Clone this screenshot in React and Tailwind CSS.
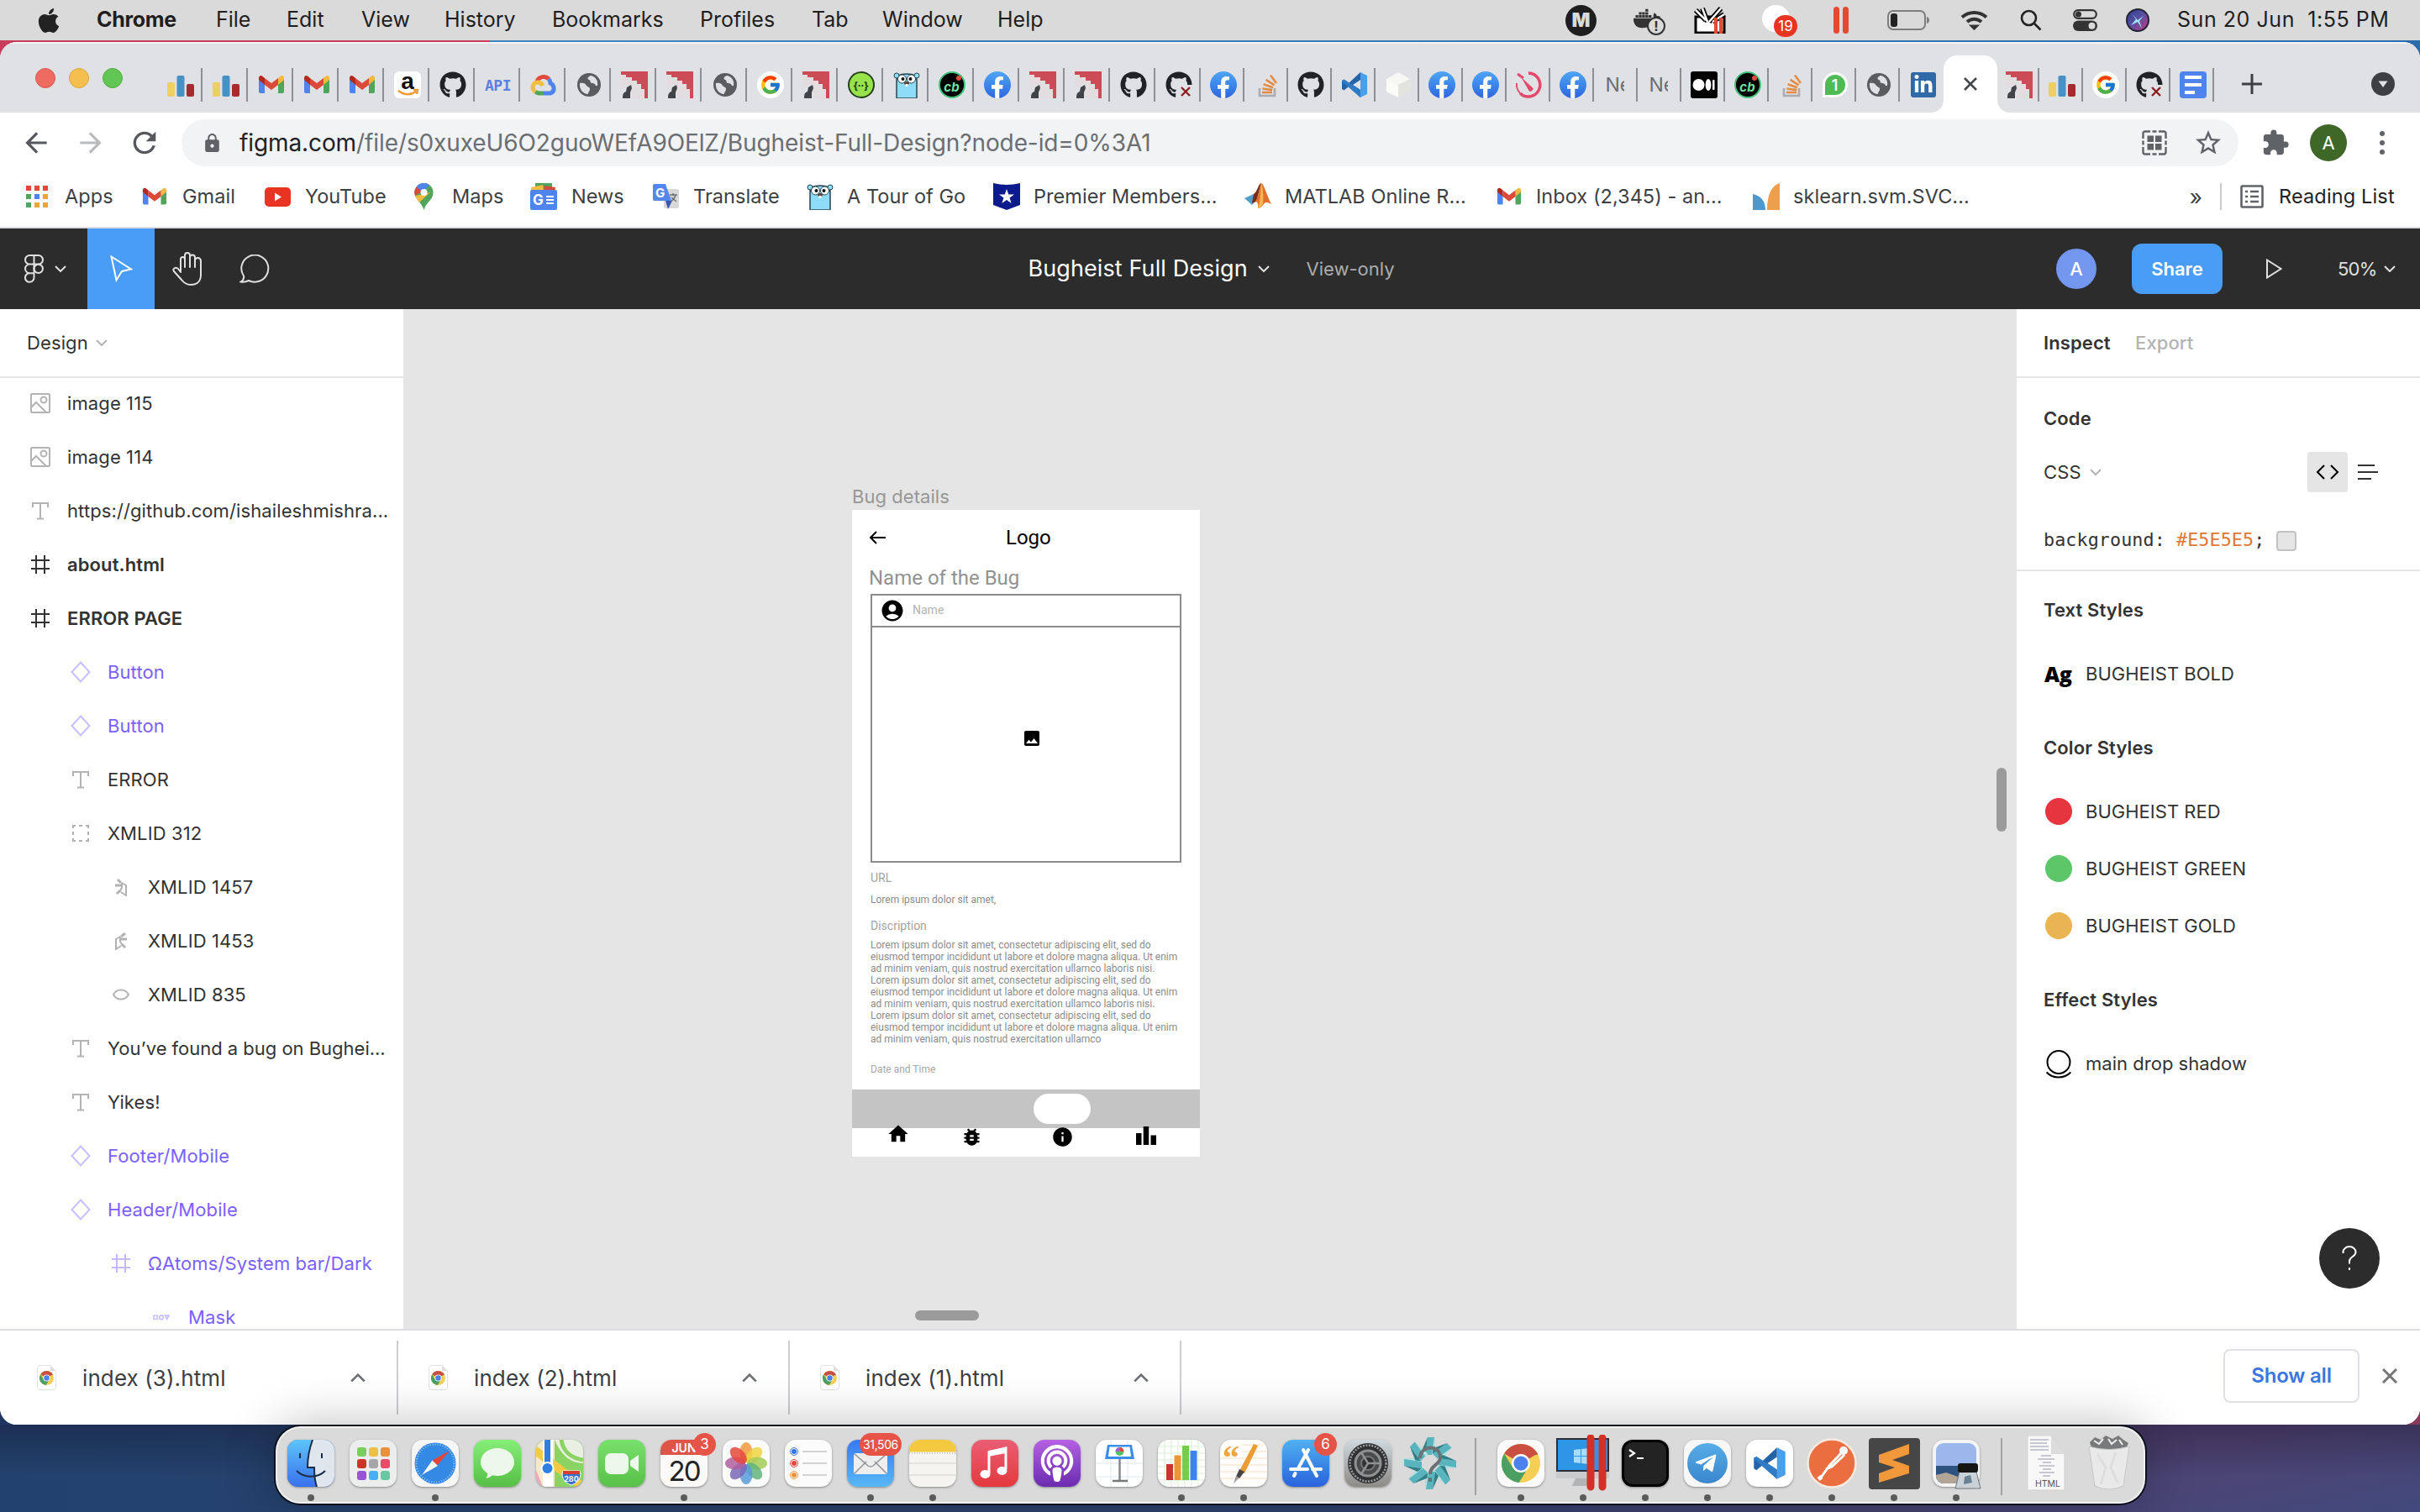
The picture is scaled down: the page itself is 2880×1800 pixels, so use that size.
import React from "react";
import { FaApple, FaGithub, FaAmazon, FaDocker, FaStackOverflow, FaLinkedinIn, FaPodcast, FaTelegramPlane, FaFacebookF } from "react-icons/fa";
import { MdHome, MdBugReport, MdInfo, MdAccountCircle, MdImage, MdExtension, MdStarBorder, MdLock, MdArrowBack, MdArrowForward, MdRefresh } from "react-icons/md";
import { FcGoogle } from "react-icons/fc";

const ui = "font-['Inter','Liberation_Sans',sans-serif]";
const rb = "font-['Roboto','Liberation_Sans',sans-serif]";

/* ---------- shared glyphs ---------- */

function Chevron({ className = "", up = false }) {
  return (
    <svg className={className} viewBox="0 0 14 8" fill="none" stroke="currentColor" strokeWidth="2">
      {up ? <path d="M1 7l6-6 6 6" /> : <path d="M1 1l6 6 6-6" />}
    </svg>
  );
}

function Gmail({ className = "h-8 w-8" }) {
  return (
    <svg className={className} viewBox="0 0 32 32">
      <path d="M1 7v17a2 2 0 002 2h5V13L4 9z" fill="#4f84ee" />
      <path d="M31 7v17a2 2 0 01-2 2h-5V13l4-4z" fill="#4ea55b" />
      <path d="M1 8v2l7 6V8L5 5.600C3.300 4.300 1 5.500 1 8z" fill="#b3291e" />
      <path d="M31 8v2l-7 6V8l3-2.400c1.700-1.300 4-.1 4 2.400z" fill="#f3b93d" />
      <path d="M8 16V8l8 6 8-6v8l-8 6z" fill="#db4a39" />
    </svg>
  );
}

function BarsIcon() {
  return (
    <svg className="h-8 w-8" viewBox="0 0 32 32">
      <rect x="0" y="13" width="9" height="17" rx="2" fill="#eecf62" />
      <rect x="11.500" y="5" width="9" height="25" rx="2" fill="#4791c7" />
      <rect x="23" y="15" width="9" height="15" rx="2" fill="#a62b2f" />
    </svg>
  );
}

function GitHubFail() {
  return (
    <div className="relative h-8 w-8">
      <FaGithub className="h-8 w-8 text-[#1f2328]" />
      <div className="absolute -right-px bottom-0 flex h-4 w-[17px] items-center justify-center bg-[#dfe1e5]">
        <svg className="h-3 w-3" viewBox="0 0 12 12" stroke="#8f1d1d" strokeWidth="2.400"><path d="M1 1l10 10M11 1L1 11" /></svg>
      </div>
    </div>
  );
}

function Globe() {
  return (
    <svg className="h-[30px] w-[30px]" viewBox="0 0 30 30">
      <circle cx="15" cy="15" r="14" fill="#5a5c5e" />
      <path d="M4 13c5-1 7 1 8 3s4 1 4 4-2 3-2 6c-6 0-11-6-10-13zM17 4c-3 1-5 4-2 5s0 4 4 4 3 4 6 3c1-6-2-11-8-12z" fill="#dfe1e5" />
    </svg>
  );
}

function KiteIcon() {
  return (
    <svg className="h-8 w-8" viewBox="0 0 32 32">
      <path d="M0 0h32v32h-4V21h-4v-6h-5v-4h-6V7H6V4H0z" fill="#cb4b57" />
      <path d="M0 4h6v3h7v4h6v4h5v6h4v11H13V16H6L0 24z" fill="#e3dde0" />
      <path d="M2 32c0-5 1-7 4-8l1-5 5-3 1 4-2 5v7z" fill="#424344" />
    </svg>
  );
}

function Gopher() {
  return (
    <svg className="h-8 w-8" viewBox="0 0 32 32">
      <path d="M4 32V10C4 5 8 3 16 3s12 2 12 7v22z" fill="#8fdcf8" stroke="#26454f" strokeWidth="1.500" />
      <circle cx="4" cy="5" r="3" fill="#8fdcf8" stroke="#26454f" />
      <circle cx="28" cy="5" r="3" fill="#8fdcf8" stroke="#26454f" />
      <circle cx="10.500" cy="9" r="5" fill="#fff" stroke="#26454f" />
      <circle cx="21.500" cy="9" r="5" fill="#fff" stroke="#26454f" />
      <circle cx="11.500" cy="9" r="2" fill="#111" />
      <circle cx="20.500" cy="9" r="2" fill="#111" />
      <ellipse cx="16" cy="14" rx="3" ry="2" fill="#5b4638" />
      <rect x="14.500" y="15" width="3" height="3" fill="#fff" />
    </svg>
  );
}

function CloudIcon() {
  return (
    <svg className="h-8 w-8" viewBox="0 0 32 32" fill="none" strokeWidth="5">
      <path d="M8 12a8.500 8.500 0 0114-3" stroke="#e24b3c" />
      <path d="M22 9c2 2 2 4 2 5 5 2 6 10 0 12h-8" stroke="#4f84ee" />
      <path d="M16 26h-6l-4-1.500" stroke="#4ea55b" />
      <path d="M6 24.500C1 20 3 13 9 13c3 0 5 2 6 4" stroke="#f3bd42" />
    </svg>
  );
}

function GoogleTab() {
  return <div className="flex h-8 w-8 items-center justify-center rounded-full bg-white"><FcGoogle className="h-[26px] w-[26px]" /></div>;
}

function Facebook() {
  return (
    <div className="flex h-8 w-8 items-end justify-center overflow-hidden rounded-full bg-linear-to-b from-[#4fa5f5] to-[#2f66dd]">
      <FaFacebookF className="h-[26px] w-[20px] text-white" />
    </div>
  );
}

function CodeBeautify() {
  return (
    <div className={`relative flex h-8 w-8 items-center justify-center rounded-full border-2 border-[#41c47c] bg-black pt-1 text-[15px] font-bold italic leading-none text-[#6fe39d] ${ui}`}>
      cb
      <i className="absolute right-[3px] top-[3px] h-[6px] w-[6px] rounded-full bg-[#e2493b]" />
    </div>
  );
}

function VsCode({ className = "h-8 w-8" }) {
  return (
    <svg className={className} viewBox="0 0 32 32">
      <path d="M23 1L9 14 3.500 9.500 1 11v10l2.500 1.500L9 18l14 13V22l-9-6 9-6z" fill="#2563a8" />
      <path d="M1 11l2.500-1.500L23 22v9L1 12z" fill="#2f7cc4" />
      <path d="M23 1l8 4v22l-8 4z" fill="#4a9fe8" />
    </svg>
  );
}

function Timer() {
  return (
    <svg className="h-8 w-8" viewBox="0 0 32 32" fill="none" stroke="#e2496a" strokeWidth="3.500">
      <path d="M15 2a14 14 0 11-10 24" />
      <path d="M1 14a15 15 0 004 12" strokeWidth="2" />
      <path d="M2 3l7 5" strokeWidth="3" />
      <path d="M8 9l8 14c3 1 4-1 4-3z" fill="#e2496a" strokeWidth="1" />
    </svg>
  );
}

const Stack = () => (
  <svg className="h-8 w-8" viewBox="0 0 32 32" fill="none" strokeWidth="2.600">
    <path d="M7 20v9h18v-9" stroke="#a9acb0" />
    <path d="M10 25h12M10.300 20.500l11.900 1.600M11.600 15.300l11.300 3.900M14.600 9.800l10 6.500M20 4.500l7 9.600" stroke="#e38b43" />
  </svg>
);
const Hub = () => <FaGithub className="h-8 w-8 text-[#1f2328]" />;

const tabIcon = {
  bars: <BarsIcon />, gmail: <Gmail />, globe: <Globe />, kite: <KiteIcon />, google: <GoogleTab />, hub: <Hub />, hubx: <GitHubFail />,
  fb: <Facebook />, cb: <CodeBeautify />, go: <Gopher />, cloud: <CloudIcon />, stack: <Stack />, vs: <VsCode />, timer: <Timer />,
  amazon: <div className="flex h-8 w-8 items-center justify-center rounded-md bg-white"><svg className="h-8 w-8" viewBox="0 0 32 32"><text x="16" y="21" textAnchor="middle" fontSize="28" fontWeight="700" fontFamily="Liberation Sans" fill="#111">a</text><path d="M5 23q11 8 21 1M23 22l5 0-1 5" fill="none" stroke="#ef9b34" strokeWidth="2.400" /></svg></div>,
  api: <span className="font-['DejaVu_Sans_Mono',monospace] text-[18px] font-bold tracking-[-0.500px] text-[#5b82e0]">API</span>,
  swagger: <div className="flex h-8 w-8 items-center justify-center rounded-full border-2 border-[#24401c] bg-[#97e34c] text-[13px] font-bold leading-none text-[#1d3a1d]">{"{··}"}</div>,
  cube: <svg className="h-8 w-8" viewBox="0 0 32 32"><path d="M16 1l14 8-14 7L2 9z" fill="#f7f7f4" /><path d="M2 9l14 7v15L2 24z" fill="#fbfbf8" /><path d="M30 9l-14 7v15l14-7z" fill="#e4e4df" /></svg>,
  ne: <span className={`-ml-[4px] w-[22px] overflow-hidden whitespace-nowrap text-[23px] text-[#6a6d70] ${ui}`}>Ne</span>,
  medium: <svg className="h-8 w-8" viewBox="0 0 32 32"><rect width="32" height="32" rx="3" fill="#000" /><circle cx="9.500" cy="16" r="7" fill="#fff" /><ellipse cx="21" cy="16" rx="3.400" ry="7" fill="#fff" /><rect x="26" y="10" width="2.500" height="12" rx="1" fill="#fff" /></svg>,
  wa: <div className={`flex h-[30px] w-[30px] items-center justify-center rounded-full rounded-bl-md border-[3px] border-white bg-[#4fbb53] text-[18px] font-semibold text-white ${ui}`}>1</div>,
  li: <div className="flex h-[30px] w-[30px] items-center justify-center rounded-[3px] bg-[#2f69a8]"><FaLinkedinIn className="h-6 w-6 text-white" /></div>,
  docs: <div className="flex h-8 w-8 flex-col justify-center gap-[5px] rounded-sm bg-[#4f83ee] px-[6px]"><i className="h-1 bg-white" /><i className="h-1 bg-white" /><i className="h-1 w-3 bg-white" /></div>,
};

const wideTabs = ["bars", "bars", "gmail", "gmail", "gmail", "amazon", "hub", "api", "cloud", "globe", "kite", "kite", "globe", "google", "kite", "swagger", "go", "cb", "fb", "kite", "kite", "hub", "hubx"];
const narrowTabs = ["fb", "stack", "hub", "vs", "cube", "fb", "fb", "timer", "fb", "ne", "ne", "medium", "cb", "stack", "wa", "globe", "li"];
const lastTabs = ["kite", "bars", "google", "hubx", "docs"];

function Tab({ name, width, line = true }) {
  return (
    <div className={`flex h-10 shrink-0 items-center justify-center pl-[3px] ${width} ${line ? "border-r-2 border-[#8c8f94]" : ""}`}>{tabIcon[name]}</div>
  );
}

/* ---------- macOS menu bar ---------- */

const menus = [["Chrome", "w-[142px] font-bold tracking-[-0.300px]"], ["File", "w-[84px]"], ["Edit", "w-[89px]"], ["View", "w-[99px]"], ["History", "w-[128px]"], ["Bookmarks", "w-[176px]"], ["Profiles", "w-[133px]"], ["Tab", "w-[84px]"], ["Window", "w-[137px]"], ["Help", "w-[60px]"]];

function MenuBar() {
  return (
    <header className={`flex h-12 items-center bg-[#dadada] text-[25px] text-[#1e1e1e] ${ui}`}>
      <div className="flex w-[115px] justify-center"><FaApple className="h-[33px] w-[30px] text-[#222]" /></div>
      {menus.map(([label, cls]) => <span key={label} className={`shrink-0 whitespace-nowrap ${cls}`}>{label}</span>)}
      <div className="ml-auto flex items-center pr-[37px]">
        <div className="mr-[44px] flex h-[37px] w-[37px] items-center justify-center rounded-full bg-[#1e1e1e] text-[23px] font-black text-[#dadada]">M</div>
        <div className="relative mr-[33px] h-8 w-[38px]">
          <FaDocker className="h-7 w-8 text-[#333]" />
          <div className="absolute -bottom-[2px] right-0 flex h-[22px] w-[22px] items-center justify-center rounded-full border-2 border-[#333] bg-[#dadada] text-[16px] font-bold leading-none text-[#333]">!</div>
        </div>
        <svg className="mx-[1px] mr-[43px] h-8 w-[38px]" viewBox="0 0 38 32">
          <rect x="2" y="12" width="34" height="19" fill="#fff" stroke="#000" strokeWidth="3" />
          <path d="M2 4l12 12M10 2l6 16M32 2L18 18M36 9L22 18" stroke="#000" strokeWidth="6" />
          <path d="M2 4l12 12M10 2l6 16M32 2L18 18M36 9L22 18" stroke="#fff" strokeWidth="2.500" />
          <path d="M26 13v19M32 13v19" stroke="#e5492f" strokeWidth="4" />
        </svg>
        <div className="relative mr-[43px] h-9 w-[42px]">
          <div className="h-8 w-[33px] rounded-full bg-white" />
          <div className="absolute -bottom-[2px] right-0 flex h-[26px] w-[28px] items-center justify-center rounded-full bg-[#ea3323] text-[17px] leading-none text-white">19</div>
        </div>
        <div className="mr-[46px] flex gap-1"><i className="h-8 w-[7px] rounded-full bg-[#e5492f]" /><i className="h-8 w-[7px] rounded-full bg-[#e5492f]" /></div>
        <svg className="mr-[36px] h-6 w-[51px]" viewBox="0 0 51 24"><rect x="1" y="1" width="44" height="22" rx="6" fill="none" stroke="#7d7d7d" strokeWidth="2" /><rect x="4" y="4" width="8" height="16" rx="3" fill="#222" /><path d="M47 8c4 1 4 7 0 8z" fill="#7d7d7d" /></svg>
        <svg className="mr-[38px] h-6 w-[33px]" viewBox="0 0 33 24" fill="none" stroke="#333" strokeWidth="4"><path d="M2 8.500c8-7.500 21-7.500 29 0" /><path d="M8 14c5-4.500 12-4.500 17 0" /><path d="M13.500 19h6l-3 3z" fill="#333" strokeWidth="3" /></svg>
        <svg className="mr-[37px] h-[26px] w-[26px]" viewBox="0 0 26 26" fill="none" stroke="#222" strokeWidth="2.600"><circle cx="10.500" cy="10.500" r="8.500" /><path d="M17 17l7.500 7.500" /></svg>
        <svg className="mr-[34px] h-[26px] w-[29px]" viewBox="0 0 29 26"><rect x="1.200" y="1.200" width="26.600" height="9.600" rx="4.800" fill="none" stroke="#333" strokeWidth="2.200" /><circle cx="6.500" cy="6" r="3.500" fill="#333" /><rect y="13.500" width="29" height="12.500" rx="6.200" fill="#333" /><circle cx="22.500" cy="19.700" r="4" fill="#dadada" /></svg>
        <svg className="mr-[33px] h-7 w-7" viewBox="0 0 28 28"><defs><linearGradient id="siri" x1="0" y1="0" x2="1" y2="1"><stop offset="0" stopColor="#2a3f8f" /><stop offset=".5" stopColor="#5d4fa3" /><stop offset="1" stopColor="#c0397c" /></linearGradient></defs><circle cx="14" cy="14" r="14" fill="#23233a" /><circle cx="14" cy="14" r="12" fill="url(#siri)" /><path d="M7 6l7 8 7-5-5 6 3 9-5-8-8 4 6-7z" fill="#9fe9f2" /></svg>
        <span className="w-[252px] whitespace-pre tracking-[0.550px]">Sun 20 Jun  1:55 PM</span>
      </div>
    </header>
  );
}

/* ---------- Chrome ---------- */

function TabStrip() {
  return (
    <div className="flex h-[84px] items-start border-t-2 border-[#f3f4f6] bg-[#dfe1e5]">
      <div className="flex w-[187px] shrink-0 gap-4 pl-[42px] pt-[29px]">
        <i className="h-6 w-6 rounded-full border border-[#d65a50] bg-[#ed6b5f]" />
        <i className="h-6 w-6 rounded-full border border-[#dba640] bg-[#f5bf4f]" />
        <i className="h-6 w-6 rounded-full border border-[#54ad45] bg-[#62c654]" />
      </div>
      <div className="flex pt-[29px]">{wideTabs.map((n, i) => <Tab key={i} name={n} width="w-[54px]" />)}</div>
      <div className="flex pt-[29px]">{narrowTabs.map((n, i) => <Tab key={i} name={n} width="w-[52px]" line={i < 16} />)}</div>
      <div className="relative mt-[14px] flex h-[68px] w-[64px] shrink-0 items-center justify-center rounded-t-2xl bg-white">
        <svg className="absolute -left-4 bottom-0 h-4 w-4" viewBox="0 0 16 16"><path d="M16 0v16H0C10 16 16 10 16 0z" fill="#fff" /></svg>
        <svg className="absolute -right-4 bottom-0 h-4 w-4" viewBox="0 0 16 16"><path d="M0 0v16h16C6 16 0 10 0 0z" fill="#fff" /></svg>
        <svg className="h-4 w-4" viewBox="0 0 16 16" stroke="#45484b" strokeWidth="2.600"><path d="M1 1l14 14M15 1L1 15" /></svg>
      </div>
      <div className="flex pt-[29px]">{lastTabs.map((n, i) => <Tab key={i} name={n} width={i ? "w-[52px]" : "w-[50px]"} />)}</div>
      <svg className="ml-[33px] mt-[36px] h-6 w-6 shrink-0" viewBox="0 0 24 24" stroke="#3c4043" strokeWidth="3"><path d="M12 0v24M0 12h24" /></svg>
      <svg className="ml-auto mr-[30px] mt-[34px] h-7 w-7 shrink-0" viewBox="0 0 28 28"><circle cx="14" cy="14" r="14" fill="#3c4043" /><path d="M8.500 10.500h11L14 18z" fill="#dfe1e5" /></svg>
    </div>
  );
}

function Toolbar() {
  return (
    <div className={`flex h-[72px] items-center ${ui}`}>
      <MdArrowBack className="ml-[24px] h-[38px] w-[38px] text-[#55585c]" />
      <MdArrowForward className="ml-[27px] h-[38px] w-[38px] text-[#b9bbbe]" />
      <MdRefresh className="ml-[25px] h-[40px] w-[40px] text-[#55585c]" />
      <div className="ml-[24px] flex h-14 w-[2448px] items-center rounded-full bg-[#f1f3f4]">
        <MdLock className="ml-[24px] h-[25px] w-[25px] text-[#5f6368]" />
        <span className="ml-[20px] whitespace-nowrap text-[28px] tracking-[-0.100px] text-[#6b6e72]"><span className="text-[#202124]">figma.com</span>/file/s0xuxeU6O2guoWEfA9OElZ/Bugheist-Full-Design?node-id=0%3A1</span>
        <svg className="ml-auto h-[30px] w-[30px]" viewBox="0 0 30 30" fill="none" stroke="#5f6368" strokeWidth="2.400">
          <path d="M1.500 10V4q0-2.500 2.500-2.500h6M12.500 1.500h5M20 1.500h6q2.500 0 2.500 2.500v6M28.500 20v6q0 2.500-2.500 2.500h-6M17.500 28.500h-5M10 28.500H4q-2.500 0-2.500-2.500v-6M1.500 17.500v-5M28.500 17.500v-5" />
          <path d="M6.500 6.500h7.500v7.500h-7.500zM16 6.500h7.500v7.500h-7.500zM6.500 16h7.500v7.500h-7.500zM16 16h7.500v7.500h-7.500z" fill="#5f6368" stroke="none" />
        </svg>
        <MdStarBorder className="ml-[31px] mr-[18px] h-[36px] w-[36px] text-[#5f6368]" />
      </div>
      <MdExtension className="ml-[27px] h-[34px] w-[34px] text-[#5f6368]" />
      <div className="ml-[24px] flex h-11 w-11 items-center justify-center rounded-full bg-[#3f6727] text-[22px] text-white">A</div>
      <div className="ml-[39px] flex flex-col gap-[5px]"><i className="h-[6px] w-[6px] rounded-full bg-[#5f6368]" /><i className="h-[6px] w-[6px] rounded-full bg-[#5f6368]" /><i className="h-[6px] w-[6px] rounded-full bg-[#5f6368]" /></div>
    </div>
  );
}

const appDots = ["bg-[#e2493b]", "bg-[#e2493b]", "bg-[#e2493b]", "bg-[#4ea55b]", "bg-[#4f84ee]", "bg-[#e9a63a]", "bg-[#4ea55b]", "bg-[#e9a63a]", "bg-[#e9a63a]"];

const bookmarks = [
  { t: "Apps", w: "w-[138px]", g: "w-[46px]", icon: <div className="grid grid-cols-3 gap-1">{appDots.map((c, i) => <i key={i} className={`h-[6px] w-[6px] ${c}`} />)}</div> },
  { t: "Gmail", w: "w-[146px]", g: "w-[48px]", icon: <Gmail className="h-[30px] w-[30px]" /> },
  { t: "YouTube", w: "w-[178px]", g: "w-[48px]", icon: <svg className="h-[23px] w-[31px]" viewBox="0 0 31 23"><rect width="31" height="23" rx="5" fill="#e93323" /><path d="M12 6.500l8 5-8 5z" fill="#fff" /></svg> },
  { t: "Maps", w: "w-[138px]", g: "w-[45px]", icon: <svg className="h-8 w-[23px]" viewBox="0 0 23 32"><path d="M11.500 0a11 11 0 00-11 11c0 9 8 11 11 21 3-10 11-12 11-21a11 11 0 00-11-11z" fill="#4ea55b" /><path d="M11.500 0a11 11 0 00-9 4.500L9 12l9-10A11 11 0 0011.500 0z" fill="#4f84ee" /><path d="M2.500 4.500A11 11 0 001 15l8-5z" fill="#d9493a" /><path d="M1 15c1 3 3 5 5 8L20 10l-6 3z" fill="#f3bd42" /><circle cx="11.500" cy="11" r="4" fill="#fff" /></svg> },
  { t: "News", w: "w-[146px]", g: "w-[49px]", icon: <svg className="h-8 w-8" viewBox="0 0 32 32"><path d="M6 0h20v9H6z" fill="#4ea55b" /><path d="M1 5l14-3 1 8H1z" fill="#f3bd42" /><path d="M17 3l13 2-1 6H16z" fill="#d9493a" /><rect y="8" width="32" height="24" rx="2" fill="#4f84ee" /><text x="3" y="26" fontSize="17" fontWeight="700" fill="#fff" fontFamily="Inter">G</text><path d="M19 16h9M19 20h9M19 24h9" stroke="#fff" strokeWidth="2.200" /></svg> },
  { t: "Translate", w: "w-[183px]", g: "w-[48px]", icon: <svg className="h-8 w-8" viewBox="0 0 32 32"><rect x="13" y="7" width="18" height="23" rx="2" fill="#d8d8d8" /><path d="M15 21h8l-5 10z" fill="#3a55b4" /><path d="M2 1h13l7 20H2a2 2 0 01-2-2V3a2 2 0 012-2z" fill="#5486ec" /><text x="3" y="17" fontSize="15" fontWeight="700" fill="#fff" fontFamily="Inter">G</text><path d="M20 14h9M24 12v3M27 14c-1 4-3 6-6 8M22 17l6 5" stroke="#6b7075" strokeWidth="1.500" fill="none" /></svg> },
  { t: "A Tour of Go", w: "w-[222px]", g: "w-[48px]", icon: <Gopher /> },
  { t: "Premier Members...", w: "w-[299px]", g: "w-[48px]", icon: <svg className="h-8 w-8" viewBox="0 0 32 32"><path d="M0 0q16 4 32 0v26l-16 6-16-6z" fill="#0b1a8c" /><path d="M16 7l2.300 6.500H25l-5.400 4 2 6.500-5.600-4-5.600 4 2-6.500-5.400-4h6.700z" fill="#fff" /></svg> },
  { t: "MATLAB Online R...", w: "w-[300px]", g: "w-[48px]", icon: <svg className="h-8 w-8" viewBox="0 0 32 32"><path d="M0 18l11-5 6 4-8 9z" fill="#4f9dc8" /><path d="M11 13c4-2 6-13 9-13l-6 22-5 2z" fill="#7a2c1b" /><path d="M20 0c4 2 7 16 12 25-4-2-7-3-9 0-2 2-4 5-7 5 1-5-1-8-3-9C17 18 17 6 20 0z" fill="#e0702c" /><path d="M20 0c2 5 3 16 2 25-2 2-3 5-6 5 3-8 3-20 4-30z" fill="#f3b650" /></svg> },
  { t: "Inbox (2,345) - an...", w: "w-[305px]", g: "w-[47px]", icon: <Gmail className="h-[30px] w-[30px]" /> },
  { t: "sklearn.svm.SVC...", w: "w-[300px]", g: "w-[48px]", icon: <svg className="h-8 w-8" viewBox="0 0 32 32"><path d="M32 0v32H17C17 14 22 3 32 0z" fill="#ee9f4b" /><path d="M0 13c10 2 15 9 15 19H0z" fill="#4f98cd" /></svg> },
];

function BookmarkBar() {
  return (
    <div className={`flex h-[64px] items-center pl-[31px] pb-[8px] text-[23.500px] text-[#3c4043] ${ui}`}>
      {bookmarks.map((b) => (
        <div key={b.t} className={`flex shrink-0 items-center ${b.w}`}>
          <div className={`flex shrink-0 ${b.g}`}>{b.icon}</div>
          <span className="whitespace-nowrap tracking-[0.050px]">{b.t}</span>
        </div>
      ))}
      <span className="ml-auto mr-[21px] text-[26px]">»</span>
      <div className="flex h-8 items-center border-l-2 border-[#c9cbce] pl-[22px] pr-[28px]">
        <svg className="mr-[18px] h-7 w-7" viewBox="0 0 28 28" stroke="#5f6368" strokeWidth="2.600" fill="none"><rect x="1.500" y="1.500" width="25" height="25" rx="1" /><path d="M6 8h3M6 14h3M6 20h3M12 8h10M12 14h10M12 20h10" strokeWidth="2.400" /></svg>
        <span className="w-[140px] whitespace-nowrap tracking-[0.150px] text-[#202124]">Reading List</span>
      </div>
    </div>
  );
}

/* ---------- Figma ---------- */

function FigmaBar() {
  return (
    <div className={`grid h-24 grid-cols-[1fr_auto_1fr] items-center bg-[#2c2c2c] text-[#e0e0e0] ${ui}`}>
      <div className="flex h-full items-center">
        <div className="flex h-full w-[104px] items-center pl-[29px]">
          <svg className="h-[34px] w-[23px]" viewBox="0 0 23 34" fill="none" stroke="currentColor" strokeWidth="2"><path d="M11.500 1H6.300a5.300 5.300 0 000 10.600h5.200zM11.500 1h5.200a5.300 5.300 0 010 10.600h-5.200zM11.500 11.600H6.300a5.300 5.300 0 000 10.600h5.200zM11.500 22.200H6.300a5.300 5.300 0 105.200 5.300z" /><circle cx="16.700" cy="16.900" r="5.200" /></svg>
          <Chevron className="ml-[13px] h-2 w-[14px]" />
        </div>
        <div className="flex h-full w-20 items-center justify-center bg-[#4a9df6] text-white">
          <svg className="h-[32px] w-[27px]" viewBox="0 0 27 32" fill="none" stroke="currentColor" strokeWidth="2"><path d="M1.500 1.500l23.500 15-11 2.500-6.500 10.500z" /></svg>
        </div>
        <svg className="ml-[21px] h-[40px] w-[35px]" viewBox="0 0 35 40" fill="none" stroke="currentColor" strokeWidth="2" strokeLinejoin="round"><path d="M10 23V8.500a2.500 2.500 0 015 0V18 4a3 3 0 016 0v14V6.500a3 3 0 016 0V18v-7.500a3 3 0 017 0V27c0 8-5 12-12 12-5 0-8-2-11-6L2 23c-2-3 2-6 5-3l3 4z" /></svg>
        <svg className="ml-[45px] h-[34px] w-[36px]" viewBox="0 0 36 34" fill="none" stroke="currentColor" strokeWidth="2"><path d="M1.500 32.500c3-2 4-5 3.500-7A16 16 0 1120 32.500c-4 .5-7-.5-9-1.500-3 1.500-6 2-9.500 1.500z" /></svg>
      </div>
      <div className="flex items-center pl-[3px]">
        <span className="w-[272px] whitespace-nowrap text-[27px] tracking-[0.100px] text-white">Bugheist Full Design</span>
        <Chevron className="ml-[2px] h-2 w-[14px]" />
        <span className="ml-[43px] text-[22px] text-[#adadad]">View-only</span>
      </div>
      <div className="flex items-center justify-end pr-[29px] text-[22px]">
        <div className="flex h-12 w-12 items-center justify-center rounded-full bg-[#7397ee] font-medium text-white">A</div>
        <div className="ml-[42px] flex h-[60px] w-[108px] items-center justify-center rounded-xl bg-[#4a9df6] font-semibold text-white">Share</div>
        <svg className="ml-[52px] mr-[66px] h-6 w-[19px]" viewBox="0 0 19 24" fill="none" stroke="currentColor" strokeWidth="2"><path d="M1 1.500l16.500 10.500L1 22.500z" /></svg>
        <span className="w-[43px] whitespace-nowrap tracking-[-0.800px]">50%</span>
        <Chevron className="ml-[12px] h-2 w-[14px]" />
      </div>
    </div>
  );
}

const layerIcon = {
  image: <svg className="h-6 w-6" viewBox="0 0 24 24" fill="none" stroke="#b3b3b3" strokeWidth="2"><rect x="1" y="1" width="22" height="22" rx="1" /><circle cx="16" cy="8" r="3.500" /><path d="M1 17l6-6 12 12" /></svg>,
  text: <svg className="h-[22px] w-[22px]" viewBox="0 0 22 22" fill="none" stroke="#b3b3b3" strokeWidth="2"><path d="M2 7V2h18v5M11 2v18M7 20.500h8" /></svg>,
  frame: <svg className="h-[22px] w-[22px]" viewBox="0 0 22 22" fill="none" stroke="#333" strokeWidth="2"><path d="M6 0v22M16 0v22M0 6h22M0 16h22" /></svg>,
  frameP: <svg className="h-[22px] w-[22px]" viewBox="0 0 22 22" fill="none" stroke="#c4baff" strokeWidth="2"><path d="M6 0v22M16 0v22M0 6h22M0 16h22" /></svg>,
  diamond: <svg className="h-[26px] w-6" viewBox="0 0 24 26" fill="none" stroke="#c9c0ff" strokeWidth="2"><path d="M12 1.500L22.500 13 12 24.500 1.500 13z" /></svg>,
  group: <svg className="h-[20px] w-[20px]" viewBox="0 0 20 20" fill="none" stroke="#b3b3b3" strokeWidth="2"><path d="M1 4V1h3M8 1h4M16 1h3v3M19 8v4M19 16v3h-3M12 19H8M4 19H1v-3M1 12V8" /></svg>,
  v1: <svg className="h-[21px] w-[14px]" viewBox="0 0 14 21" fill="none" stroke="#b3b3b3" strokeWidth="2"><path d="M8 5l5 3v12l-6-4M8 5v6l-3 5" /><path d="M3 1l4 4M0 8h8M2 18l4-4" strokeWidth="3" /></svg>,
  v2: <svg className="h-[21px] w-[14px]" viewBox="0 0 14 21" fill="none" stroke="#b3b3b3" strokeWidth="2"><path d="M6 5L1 8v12l6-4M6 5v6l3 5" /><path d="M12 1L7 5M6 8h8M8 14l4 4" strokeWidth="3" /></svg>,
  eye: <svg className="h-[14px] w-[20px]" viewBox="0 0 20 14" fill="none" stroke="#b3b3b3" strokeWidth="2"><path d="M1 7c2-4 5-5.500 9-5.500S17 3 19 7c-2 4-5 5.500-9 5.500S3 11 1 7z" /></svg>,
  mask: <svg className="h-[7px] w-[20px]" viewBox="0 0 20 7" fill="none" stroke="#c9c0ff" strokeWidth="1.700"><path d="M1 1h4v4.500H1z" /><circle cx="10" cy="3.300" r="2.400" /><path d="M14.500 1.200h4.500l-2.200 4.300z" /></svg>,
};

const layers = [
  ["image", 0, "image 115"], ["image", 0, "image 114"], ["text", 0, "https://github.com/ishaileshmishra..."],
  ["frame", 0, "about.html", "font-semibold"], ["frame", 0, "ERROR PAGE", "font-semibold"],
  ["diamond", 1, "Button", "text-[#7b61ff]"], ["diamond", 1, "Button", "text-[#7b61ff]"], ["text", 1, "ERROR"], ["group", 1, "XMLID 312"],
  ["v1", 2, "XMLID 1457"], ["v2", 2, "XMLID 1453"], ["eye", 2, "XMLID 835"], ["text", 1, "You’ve found a bug on Bughei...", "tracking-[-0.020px]"], ["text", 1, "Yikes!"],
  ["diamond", 1, "Footer/Mobile", "text-[#7b61ff]"], ["diamond", 1, "Header/Mobile", "text-[#7b61ff]"],
  ["frameP", 2, "ΩAtoms/System bar/Dark", "text-[#7b61ff]"], ["mask", 3, "Mask", "text-[#7b61ff]"],
];
const indent = ["pl-[32px]", "pl-[80px]", "pl-[128px]", "pl-[176px]"];

function LayerPanel() {
  return (
    <aside className="flex w-[480px] shrink-0 flex-col overflow-hidden bg-white text-[22px] tracking-[0.110px] text-[#333]">
      <div className="flex h-[82px] shrink-0 items-center border-b-2 border-[#e5e5e5] pl-8">
        Design <Chevron className="ml-[9px] h-2 w-[14px] text-[#b3b3b3]" />
      </div>
      <div className="-mt-[2px] min-h-0 flex-1 overflow-hidden">
        {layers.map(([icon, lvl, label, cls = ""], i) => (
          <div key={i} className={`flex h-16 items-center ${indent[lvl]}`}>
            <div className="mr-4 flex w-8 justify-center">{layerIcon[icon]}</div>
            <span className={`whitespace-nowrap ${cls}`}>{label}</span>
          </div>
        ))}
      </div>
    </aside>
  );
}

const paragraph = [
  "Lorem ipsum dolor sit amet, consectetur adipiscing elit, sed do", "eiusmod tempor incididunt ut labore et dolore magna aliqua. Ut enim", "ad minim veniam, quis nostrud exercitation ullamco laboris nisi.",
  "Lorem ipsum dolor sit amet, consectetur adipiscing elit, sed do", "eiusmod tempor incididunt ut labore et dolore magna aliqua. Ut enim", "ad minim veniam, quis nostrud exercitation ullamco laboris nisi.",
  "Lorem ipsum dolor sit amet, consectetur adipiscing elit, sed do", "eiusmod tempor incididunt ut labore et dolore magna aliqua. Ut enim", "ad minim veniam, quis nostrud exercitation ullamco",
];

function PhoneFrame() {
  return (
    <div className="absolute left-[534px] top-[209px] w-[414px]">
      <div className="h-[30px] text-[22px] leading-[28px] tracking-[0.050px] text-[#979797]">Bug details</div>
      <div className={`flex h-[770px] flex-col bg-white text-[12px] text-[#8c8c8c] ${rb}`}>
        <div className="flex h-[66px] items-center pl-[20px] text-[24px] text-black">
          <svg className="h-4 w-5" viewBox="0 0 20 16" fill="none" stroke="#000" strokeWidth="2"><path d="M9 1L2 8l7 7M2 8h18" /></svg>
          <span className="ml-[143px]">Logo</span>
        </div>
        <div className="h-[34px] pl-[20px] text-[24px] leading-[30px] text-[#929292]">Name of the Bug</div>
        <div className="mx-[22px] h-[320px] border-2 border-[#8c8c8c]">
          <div className="flex h-[38px] items-center border-b-2 border-[#8c8c8c] pl-[9px] pb-px text-[14px] text-[#b4b4b4]">
            <MdAccountCircle className="h-[30px] w-[30px] text-black" />
            <span className="ml-[9px]">Name</span>
          </div>
          <div className="pl-[178px] pt-[120px]"><MdImage className="h-6 w-6 text-black" /></div>
        </div>
        <div className="pl-[22px]">
          <div className="mt-[9px] h-[18px] text-[14px] leading-[18px] text-[#a4a4a4]">URL</div>
          <div className="mt-[9px] h-4 leading-4">Lorem ipsum dolor sit amet,</div>
          <div className="mt-[14px] h-[18px] text-[14px] leading-[18px] text-[#a4a4a4]">Discription</div>
          <div className="mt-[7px] leading-[14px]">{paragraph.map((l, i) => <div key={i} className="whitespace-nowrap">{l}</div>)}</div>
          <div className="mt-[21px] h-4 leading-4 text-[#a8a8a8]">Date and Time</div>
        </div>
        <div className="mt-auto h-[46px] bg-[#c4c4c4] pl-[216px] pt-[5px]"><div className="h-9 w-[68px] rounded-full bg-white" /></div>
        <div className="flex h-[34px] items-start text-black">
          <MdHome className="-mt-[7px] ml-[41px] h-7 w-7" />
          <MdBugReport className="-mt-[3px] ml-[60px] h-[27px] w-[27px]" />
          <MdInfo className="-mt-[3px] ml-[81px] h-[27px] w-[27px]" />
          <svg className="-mt-[2px] ml-[74px] h-[22px] w-6" viewBox="0 0 24 22"><path d="M0 8h6.500v14H0zM8.700 0h6.500v22H8.700zM17.500 10.500H24V22h-6.500z" /></svg>
        </div>
      </div>
    </div>
  );
}

function Canvas() {
  return (
    <main className="relative min-w-0 flex-1 bg-[#e5e5e5]">
      <PhoneFrame />
      <div className="absolute left-[1896px] top-[546px] h-[76px] w-3 rounded-full bg-[#9b9b9b]" />
      <div className="absolute left-[609px] top-[1192px] h-3 w-[76px] rounded-full bg-[#9b9b9b]" />
    </main>
  );
}

function StyleRow({ icon, label }) {
  return <div className="flex h-[68px] items-center tracking-[0.020px]"><div className="flex w-[50px]">{icon}</div>{label}</div>;
}

function InspectPanel() {
  return (
    <aside className="relative w-[480px] shrink-0 bg-white text-[22px] leading-8 tracking-[0.110px] text-[#333]">
      <div className="flex h-[82px] items-center border-b-2 border-[#e5e5e5] pl-8">
        <span className="w-[109px] font-semibold">Inspect</span>
        <span className="font-medium text-[#b3b3b3]">Export</span>
      </div>
      <div className="h-[230px] border-b-2 border-[#e5e5e5] pl-8 pt-8">
        <div className="font-semibold">Code</div>
        <div className="mt-6 flex h-12 items-center">
          CSS <Chevron className="ml-[10px] h-2 w-[14px] text-[#b3b3b3]" />
          <div className="ml-auto flex h-12 w-12 items-center justify-center rounded bg-[#e5e5e5]">
            <svg className="h-[18px] w-7" viewBox="0 0 28 18" fill="none" stroke="#000" strokeWidth="2"><path d="M10 1L2 9l8 8M18 1l8 8-8 8" /></svg>
          </div>
          <svg className="ml-3 mr-[50px] h-[18px] w-6" viewBox="0 0 24 18" stroke="#333" strokeWidth="2"><path d="M0 1h20M0 9h24M0 17h16" /></svg>
        </div>
        <div className="mt-[41px] flex items-center font-['DejaVu_Sans_Mono','Liberation_Mono',monospace] text-[21.700px]">
          background:&nbsp;<span className="text-[#e07633]">#E5E5E5</span>;
          <i className="ml-[14px] mt-[2px] h-6 w-6 rounded border-2 border-[#c2c2c2] bg-[#e5e5e5]" />
        </div>
      </div>
      <div className="pl-8 pt-[30px]">
        <div className="font-semibold">Text Styles</div>
        <div className="mt-[26px]"><StyleRow label="BUGHEIST BOLD" icon={<span className="ml-px font-['Open_Sans','Noto_Sans',sans-serif] text-[25px] font-extrabold leading-none tracking-[-0.500px] text-black">Ag</span>} /></div>
        <div className="mt-[38px] font-semibold">Color Styles</div>
        <div className="mt-[26px]">
          <StyleRow label="BUGHEIST RED" icon={<i className="ml-[2px] h-8 w-8 rounded-full bg-[#e6353f]" />} />
          <StyleRow label="BUGHEIST GREEN" icon={<i className="ml-[2px] h-8 w-8 rounded-full bg-[#5cc668]" />} />
          <StyleRow label="BUGHEIST GOLD" icon={<i className="ml-[2px] h-8 w-8 rounded-full bg-[#eab452]" />} />
        </div>
        <div className="mt-[38px] font-semibold">Effect Styles</div>
        <div className="mt-[26px]"><StyleRow label="main drop shadow" icon={<svg className="ml-[3px] mt-[2px] h-[34px] w-[30px]" viewBox="0 0 30 34" fill="none" stroke="#000" strokeWidth="2"><circle cx="15" cy="14.500" r="13.500" /><path d="M.7 26.500c7 8 21 8 28.600 0" /></svg>} /></div>
      </div>
      <div className="absolute bottom-[48px] right-[48px] flex h-[72px] w-[72px] items-center justify-center rounded-full bg-[#2c2c2c]">
        <svg className="h-[30px] w-[18px]" viewBox="0 0 18 30" fill="none" stroke="#fff" strokeWidth="2"><path d="M1.500 9V7.500a7.500 6.500 0 0115 0c0 6-7.500 5-7.500 11v3M9 26v3" /></svg>
      </div>
    </aside>
  );
}

/* ---------- downloads ---------- */

function ChromeDot({ className }) {
  return (
    <svg className={className} viewBox="0 0 40 40">
      <circle cx="20" cy="20" r="20" fill="#f5cf55" />
      <path d="M20 20L2.700 10A20 20 0 0137.300 10z" fill="#c94f43" />
      <path d="M20 11h17.800A20 20 0 0037.300 10L20 8z" fill="#c94f43" />
      <path d="M2.700 10A20 20 0 0018 40l9.500-15.500L12 25z" fill="#4c9f63" />
      <circle cx="20" cy="20" r="9.500" fill="#fff" />
      <circle cx="20" cy="20" r="7.500" fill="#4c82ee" />
    </svg>
  );
}

function Downloads() {
  return (
    <div className={`flex h-[114px] border-t-2 border-[#dadcdf] bg-white text-[#3c4043] ${ui}`}>
      {["index (3).html", "index (2).html", "index (1).html"].map((f, i) => (
        <div key={f} className={`mt-3 flex h-[88px] items-center border-r-2 border-[#cbcdd0] ${i ? "w-[466px] pl-[36px]" : "w-[474px] pl-[44px]"}`}>
          <div className="relative flex h-[30px] w-[23px] items-center justify-center rounded-sm border border-[#e2e2e2] bg-white">
            <ChromeDot className="h-[17px] w-[17px]" />
            <svg className="absolute -right-px -top-px h-[7px] w-[7px]" viewBox="0 0 8 8"><path d="M0 0l8 8H0z" fill="#dedede" /><path d="M0 0h8v8z" fill="#fff" /></svg>
          </div>
          <span className="ml-[31px] whitespace-nowrap text-[26px] tracking-[0.100px]">{f}</span>
          <Chevron up className="ml-auto mr-[37px] h-[11px] w-[18px] text-[#6b6e72]" />
        </div>
      ))}
      <div className="ml-auto mt-[22px] flex h-16 w-[162px] items-center justify-center rounded-lg border-2 border-[#dfe1e4] text-[24px] font-semibold tracking-[-0.200px] text-[#3b76e0]">Show all</div>
      <svg className="ml-[27px] mr-[27px] mt-[45px] h-[18px] w-[18px]" viewBox="0 0 18 18" stroke="#757575" strokeWidth="3"><path d="M1 1l16 16M17 1L1 17" /></svg>
    </div>
  );
}

/* ---------- Dock ---------- */

const petals = ["#ee9a3c", "#f0d443", "#a4cc56", "#62b47c", "#5a9bd8", "#7a68b8", "#b0609f", "#e5483c"];

function Tile({ children, className = "" }) {
  return <div className={`relative flex h-14 w-14 items-center justify-center overflow-hidden rounded-[13px] shadow-sm shadow-black/30 ${className}`}>{children}</div>;
}
function Badge({ children, className = "" }) {
  return <div className={`absolute flex h-[27px] min-w-[27px] items-center justify-center whitespace-nowrap rounded-full bg-[#e55447] leading-none text-white ${className}`}>{children}</div>;
}
function Full({ children }) {
  return <svg className="h-14 w-14" viewBox="0 0 56 56">{children}</svg>;
}

const dockLeft = [
  [1, <Tile className="bg-[#3b7cf0]"><Full><defs><linearGradient id="fd" x1="0" y1="0" x2="0" y2="1"><stop offset="0" stopColor="#5ec4f8" /><stop offset="1" stopColor="#3871ee" /></linearGradient></defs><rect width="56" height="56" fill="url(#fd)" /><path d="M30 0c-5 14-6 24-6 33h8c0 9 1 17 3 23h21V0z" fill="#dfe6ee" /><path d="M15 16v6M41 16v6M30 0c-5 14-6 24-6 33h8c0 9 1 17 3 23M11 37c9 9 25 9 34 0" fill="none" stroke="#1c2c44" strokeWidth="2" /></Full></Tile>],
  [0, <Tile className="bg-[#eceded]"><div className="grid grid-cols-3 gap-[3px]">{["bg-[#78d05a]", "bg-[#eebf42]", "bg-[#ea9039]", "bg-[#cf3328]", "bg-[#a4a6a8]", "bg-[#ec4a67]", "bg-[#9a52d8]", "bg-[#49aef5]", "bg-[#67c9a2]"].map((c, i) => <i key={i} className={`h-[11px] w-[11px] rounded-[3px] ${c}`} />)}</div></Tile>],
  [1, <Tile className="bg-[#f6f6f6]"><Full><circle cx="28" cy="28" r="24.500" fill="#3389e3" /><circle cx="28" cy="28" r="22.500" fill="none" stroke="#9fccf5" strokeWidth="2" strokeDasharray="1 2" /><path d="M45 13L24.500 24.500l6 6z" fill="#e2463b" /><path d="M12 42l19-11-6.500-6.500z" fill="#f4f4f4" /></Full></Tile>],
  [0, <Tile className="bg-linear-to-b from-[#84ee78] to-[#55c044]"><Full><path d="M28 10c11 0 20 7 20 16.500S39 43 28 43c-2 0-4-.3-6-.8-2 2-5 3.300-8 3.500 2-1.600 2.500-4 2-6C11 36.500 8 32 8 26.500 8 17 17 10 28 10z" fill="#eef7ec" /></Full></Tile>],
  [0, <Tile className="bg-[#8fd268]"><Full><rect width="56" height="56" fill="#8bd464" /><path d="M0 0h22v56H0z" fill="#f4e9c8" /><path d="M22 0h34v28C38 28 28 14 22 0z" fill="#e9efe2" /><path d="M30 0c2 14 12 22 26 24" stroke="#8bd464" strokeWidth="5" fill="none" /><path d="M-2 12L58 58" stroke="#f5c941" strokeWidth="10" /><path d="M0 36l8 20H0z" fill="#f0a6bb" /><path d="M8 0h12v56H8z" fill="#fff" /><path d="M10 0h7v30h-7z" fill="#2d7fe4" /><circle cx="13.500" cy="34" r="8" fill="#fff" /><circle cx="13.500" cy="34" r="6" fill="#2d7fe4" /><path d="M32 37h20c3 8-2 14-10 17-8-3-13-9-10-17z" fill="#3670c8" stroke="#fff" /><path d="M32 37h20v4H32z" fill="#d8412f" /><text x="42" y="50" textAnchor="middle" fontSize="9" fontWeight="700" fill="#fff" fontFamily="Inter">280</text></Full></Tile>],
  [0, <Tile className="bg-linear-to-b from-[#78e06c] to-[#57c246]"><Full><rect x="8" y="16" width="28" height="25" rx="7" fill="#eef7ec" /><path d="M38 25l10-7v20l-10-7z" fill="#eef7ec" /></Full></Tile>],
  [1, <><Tile className="flex-col bg-[#fbfaf8]"><div className="flex h-[18px] w-full shrink-0 items-center justify-center bg-[#df5446] text-[14px] font-semibold text-white">JUN</div><div className="flex flex-1 items-center text-[33px] leading-none tracking-[-2px] text-[#222]">20</div></Tile><Badge className="-right-[10px] -top-[8px] text-[17px]">3</Badge></>],
  [0, <Tile className="bg-[#fbfbfb]"><Full>{petals.map((c, i) => <ellipse key={c} cx="28" cy="15" rx="7.500" ry="12" fill={c} opacity=".85" transform={`rotate(${i * 45} 28 28)`} />)}</Full></Tile>],
  [0, <Tile className="bg-[#fbfbfb]"><Full>{[["#2f78ef", 14], ["#e2483b", 28], ["#e8963a", 42]].map(([c, y]) => <g key={y}><circle cx="11" cy={y} r="4.500" fill="none" stroke={c} strokeWidth="1" /><circle cx="11" cy={y} r="3" fill={c} /><path d={`M21 ${y}h29`} stroke="#c4c4c4" strokeWidth="1.500" /></g>)}</Full></Tile>],
  [1, <><Tile className="bg-linear-to-b from-[#3a78ee] to-[#57b8f6]"><Full><rect x="8" y="16" width="40" height="25" rx="3" fill="#eeeeee" /><path d="M9 40l14-14M47 40L33 26M9 17l16 14q3 2 6 0l16-14" fill="none" stroke="#8f9296" strokeWidth="1.500" /></Full></Tile><Badge className="-right-[9px] -top-[8px] w-[50px] text-[14px] tracking-[-0.400px]">31,506</Badge></>],
  [1, <Tile className="bg-[#f5f4f0]"><Full><rect width="56" height="14.500" fill="#f3c93f" /><path d="M0 16h56" stroke="#999" strokeDasharray="1 2" /><path d="M0 28h56M0 42h56" stroke="#d4d3cf" /></Full></Tile>],
  [0, <Tile className="bg-linear-to-b from-[#ea5d73] to-[#e4383d]"><Full><path d="M21 40V15l20-5v25" fill="none" stroke="#fff" strokeWidth="3" /><path d="M20 13l21-4v7l-21 4z" fill="#fff" /><ellipse cx="16.500" cy="41" rx="6" ry="5" fill="#fff" /><ellipse cx="36.500" cy="37" rx="6" ry="5" fill="#fff" /></Full></Tile>],
  [0, <Tile className="bg-linear-to-b from-[#b561e2] to-[#6c2ab0]"><FaPodcast className="h-11 w-11 text-white" /></Tile>],
  [0, <Tile className="bg-white"><Full><path d="M18 0v56M38 0v56M0 28h56M0 44h56" stroke="#dce8f5" /><path d="M14 6h29l3 17H11z" fill="#3c8fe8" /><path d="M16.500 8.500h24L42 20H15z" fill="#fff" /><circle cx="28.500" cy="14" r="5" fill="#55c169" /><path d="M28.500 14V9a5 5 0 015 5z" fill="#e2483b" /><path d="M28.500 14h-5a5 5 0 015-5z" fill="#a85fd0" /><path d="M28.500 23v26" stroke="#85898e" strokeWidth="2.500" /><path d="M20 49h18" stroke="#777" strokeWidth="2.500" /></Full></Tile>],
  [1, <Tile className="bg-white"><Full><path d="M0 8h56M0 16h56M0 24h56M0 32h56M0 40h56M0 48h56M8 0v56M16 0v56M24 0v56M32 0v56M40 0v56M48 0v56" stroke="#d8efd2" /><path d="M10 29h8v19h-8z" fill="#cc3434" /><path d="M19.500 18.500h8V48h-8z" fill="#ec9437" /><path d="M29 7h8v41h-8z" fill="#72cf4d" /><path d="M38.500 13h8v35h-8z" fill="#3b83ee" /></Full></Tile>],
  [1, <Tile className="bg-[#fefdfb]"><Full><path d="M26 6h30M26 14h30M0 22h56M0 30h56M0 38h56M0 46h56" stroke="#f8e0c4" /><text x="3" y="35" fontSize="40" fontWeight="700" fill="#efa63e" fontFamily="Liberation Serif">“</text><path d="M40 5l5 2-16 33-6-3z" fill="#eb9c35" /><path d="M23 35l6 3-6 8-4-2z" fill="#444" /><path d="M19 43l4 2-7 7z" fill="#999" /></Full></Tile>],
  [0, <><Tile className="bg-linear-to-b from-[#51b0f1] to-[#2b62dc]"><svg className="h-10 w-10" viewBox="0 0 40 40" stroke="#fff" strokeWidth="4" strokeLinecap="round"><path d="M17 4l16 31M23 4L11 26M2 27h20M28 27h10M6 35l1.500-3" /></svg></Tile><Badge className="-right-[9px] -top-[8px] text-[17px]">6</Badge></>],
  [0, <Tile className="bg-linear-to-b from-[#cfd9df] to-[#8d8b87]"><Full><circle cx="28" cy="28" r="24" fill="#303133" /><circle cx="28" cy="28" r="21.500" fill="none" stroke="#9a9c9e" strokeWidth="2.500" strokeDasharray="2 1.500" /><circle cx="28" cy="28" r="15" fill="#4a4b4d" stroke="#8f9193" strokeWidth="3" /><circle cx="28" cy="28" r="8" fill="#303133" stroke="#777" strokeWidth="2" /><path d="M28 28h15M28 28l-8-13M28 28l-8 13" stroke="#8f9193" strokeWidth="2.500" /></Full></Tile>],
  [0, <svg className="h-16 w-16" viewBox="0 0 64 64">{[0, 45, 90, 135, 180, 225, 270, 315].map((a) => <g key={a} transform={`rotate(${a} 32 32)`}><path d="M29 1h8l1 21H26z" fill="#58b4bd" /><path d="M26 22l3-21-7 16z" fill="#2f7f89" /><path d="M37 1l-3 21h4z" fill="#b9e6e8" /></g>)}<circle cx="32" cy="32" r="10" fill="#dadada" /><path d="M20 26c0-16 24-17 24-1 0 9-12 9-12 20M32 49v5" fill="none" stroke="#6e7173" strokeWidth="4" /></svg>],
];

const dockRight = [
  [1, <Tile className="bg-[#fafafa]"><ChromeDot className="h-[46px] w-[46px]" /></Tile>],
  [1, <svg className="h-[68px] w-[66px]" viewBox="0 0 66 68"><path d="M1 4h63v46H1z" fill="#2c3036" /><path d="M3 6h59v36H3z" fill="#2f96e6" /><path d="M1 44h63v8H1z" fill="#c9cbcd" /><path d="M24 52h18l4 9H20z" fill="#b2b4b6" /><path d="M22 18l8-1v8h-8zM31 17l9-1v9h-9zM22 26h8v8l-8-1zM31 26h9v9l-9-1z" fill="#a8dcff" /><path d="M42 4v58M56 4v58" stroke="#d33128" strokeWidth="9" strokeLinecap="round" /></svg>],
  [1, <Tile className="border-[3px] border-black bg-[#232323]"><svg className="h-full w-full" viewBox="0 0 50 50" fill="none" stroke="#fff" strokeWidth="2.200"><path d="M6 9l6 4-6 4M15 19h8" /></svg></Tile>],
  [1, <Tile className="bg-[#f7f7f7]"><div className="flex h-[48px] w-[48px] items-center justify-center rounded-full bg-linear-to-b from-[#57ace8] to-[#3a87cb]"><FaTelegramPlane className="mr-1 h-7 w-7 text-white" /></div></Tile>],
  [1, <Tile className="bg-white"><VsCode className="h-10 w-10" /></Tile>],
  [1, <svg className="h-[60px] w-[60px]" viewBox="0 0 60 60"><circle cx="30" cy="30" r="28.500" fill="#ea6e3f" stroke="#f8e9e1" strokeWidth="2.500" /><circle cx="44" cy="15" r="5" fill="#fff" /><path d="M41 18L27 33l-10 14M45 20L30 34l-7 3" stroke="#fff" strokeWidth="3" fill="none" /><path d="M18 46l-4 3" stroke="#fff" strokeWidth="5" /></svg>],
  [1, <div className="flex h-[61px] w-[61px] items-center justify-center rounded bg-[#464646]"><svg className="h-[46px] w-[36px]" viewBox="0 0 36 46"><path d="M0 13L36 0v12L16 19l20 7v9L0 46V35l19-7-19-6z" fill="#f0983a" /></svg></div>],
  [1, <><Tile className="border-[4px] border-[#f4f4f4] bg-[#9bb7ec]"><svg className="h-full w-full" viewBox="0 0 48 48" preserveAspectRatio="none"><path d="M0 27h48v21H0z" fill="#2e5380" /><path d="M0 38l12-3 14 5v8H0z" fill="#b3a596" /></svg></Tile><svg className="absolute -bottom-1 -right-[2px] h-8 w-8" viewBox="0 0 32 32"><path d="M6 10h20l5 20H1z" fill="#c9d2d8" stroke="#6f777c" /><rect x="4" y="0" width="24" height="11" rx="3" fill="#161616" /><path d="M12 16l7-2 2 9-10 2z" fill="#6a8296" /></svg></>],
];

const files = [
  <svg className="h-[66px] w-[46px]" viewBox="0 0 46 66"><path d="M0 0h28l16 22v43H0z" fill="#f8f8f8" stroke="#d0d0d0" /><path d="M28 0v22h16z" fill="#dcdcdc" /><path d="M3 5h22M3 9h20M3 13h22M3 17h22M16 24h12M12 28h20M18 32h10M14 36h18M18 40h10M14 44h18M18 48h9" stroke="#b6b6c4" strokeWidth="1.300" /><text x="9" y="61" fontSize="10.500" fill="#555" fontFamily="Inter">HTML</text></svg>,
  <svg className="h-[66px] w-[52px]" viewBox="0 0 52 66"><path d="M3 8l6-6 7 3 6-5 8 4 7-4 6 5 6 4-4 9H6z" fill="#77797a" /><path d="M8 6l6 4 5-6M25 4l4 6 6-5M38 5l4 6" stroke="#eee" strokeWidth="2" fill="none" /><path d="M2 13q24 7 48 0l-7 47q-17 8-34 0z" fill="#e9e9e9" stroke="#c6c6c6" /><path d="M12 22l10 16-6 20M34 20l-6 18 8 18" stroke="#dedede" strokeWidth="3" fill="none" /></svg>,
];

function DockItem({ on, children }) {
  return (
    <div className="relative flex h-full w-[74px] shrink-0 flex-col items-center">
      <div className="relative mt-[14px] flex h-14 items-center justify-center">{children}</div>
      {on ? <i className="mt-[9px] h-2 w-2 shrink-0 rounded-full bg-[#5b5b5b]" /> : null}
    </div>
  );
}
const Divider = () => <div className="flex w-[34px] shrink-0 justify-center pt-[12px]"><i className="h-[68px] w-[2px] bg-[#a2a2a2]" /></div>;

function Dock() {
  return (
    <nav className={`relative z-10 flex h-[92px] w-[2225px] rounded-[30px] border-2 border-[#f1f1f1] bg-[#dadada] pl-[3px] shadow-[0_0_0_2px_#0c101c,0_0_60px_rgba(0,0,0,0.280)] ${ui}`}>
      {dockLeft.map(([on, el], i) => <DockItem key={i} on={on}>{el}</DockItem>)}
      <Divider />
      {dockRight.map(([on, el], i) => <DockItem key={i} on={on}>{el}</DockItem>)}
      <Divider />
      {files.map((el, i) => <DockItem key={i}>{el}</DockItem>)}
    </nav>
  );
}

export default function App() {
  return (
    <div className="h-[1800px] w-[2880px] overflow-hidden bg-[linear-gradient(90deg,#1d3560_0%,#1d3560_50%,#8a3a58_100%)]">
      <MenuBar />
      <div className="h-[1648px] bg-[linear-gradient(90deg,#c93d5c_0%,#c93d5c_583px,#3f85bd_583px,#2a6cab_100%)] bg-[length:100%_40px] bg-no-repeat pt-[2px]">
        <section className="flex h-[1646px] flex-col overflow-hidden rounded-[20px] bg-white">
          <TabStrip />
          <Toolbar />
          <BookmarkBar />
          <div className={`flex h-[1312px] flex-col border-t-2 border-[#dadce0] ${ui}`}>
            <FigmaBar />
            <div className="flex min-h-0 flex-1">
              <LayerPanel />
              <Canvas />
              <InspectPanel />
            </div>
          </div>
          <Downloads />
        </section>
      </div>
      <div className="h-[104px] bg-[linear-gradient(180deg,rgba(12,8,24,0.300),transparent_60%),linear-gradient(90deg,#22426d_0%,#2f4270_55%,transparent_92%),linear-gradient(168deg,#7d3454_0%,#6a3a62_45%,#42497c_100%)] pl-[328px] pt-[2px]">
        <Dock />
      </div>
    </div>
  );
}
